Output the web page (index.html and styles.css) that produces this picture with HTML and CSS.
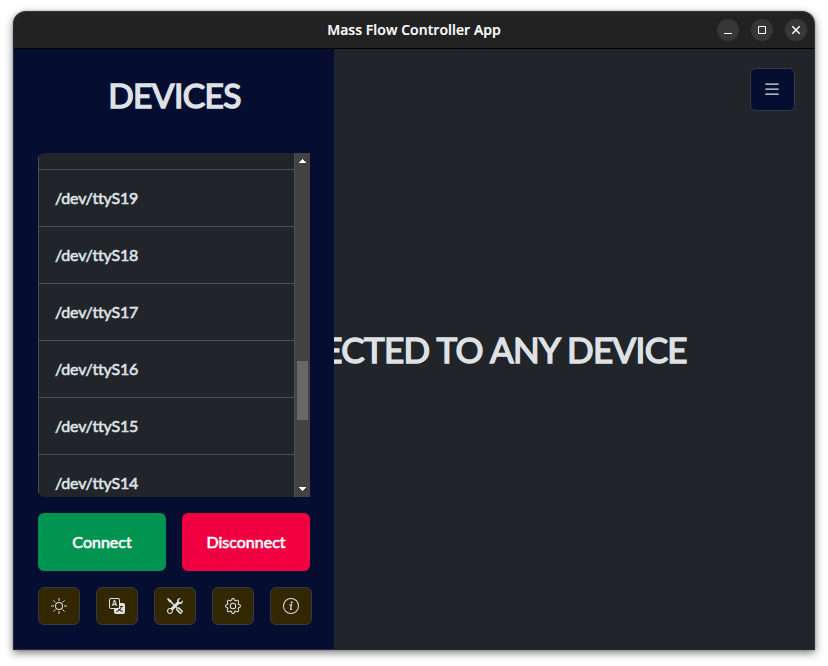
FILE: index.html
```html
<!DOCTYPE html>
<html lang="en">
<head>
<meta charset="utf-8">
<title>Mass Flow Controller App</title>
<link rel="stylesheet" href="styles.css">
</head>
<body>
<div class="window">
  <header class="titlebar">
    <span class="title">Mass Flow Controller App</span>
    <div class="controls">
      <span class="control"><svg viewBox="0 0 22 22"><path d="M7 14.5h8"/></svg></span>
      <span class="control"><svg viewBox="0 0 22 22"><path d="M7.500 7.500h7v7h-7z"/></svg></span>
      <span class="control"><svg viewBox="0 0 22 22"><path stroke-width="1.500" d="M7.300 7.300l7.400 7.400M14.700 7.300l-7.400 7.400"/></svg></span>
    </div>
  </header>
  <div class="app">
    <main class="main">
      <button class="menu-button"><svg class="icon icon-menu" viewBox="0 0 16 16"><path fill-rule="evenodd" d="M2.500 12a.5.5 0 0 1 .5-.5h10a.5.5 0 0 1 0 1H3a.5.5 0 0 1-.5-.5zm0-4a.5.5 0 0 1 .5-.5h10a.5.5 0 0 1 0 1H3a.5.5 0 0 1-.5-.5zm0-4a.5.5 0 0 1 .5-.5h10a.5.5 0 0 1 0 1H3a.5.5 0 0 1-.5-.5z"/></svg></button>
      <h1 class="status">NOT CONNECTED TO ANY DEVICE</h1>
    </main>
    <aside class="sidebar">
      <h2 class="heading">DEVICES</h2>
      <div class="device-box">
        <ul class="devices">
          <li></li>
          <li>/dev/ttyS19</li>
          <li>/dev/ttyS18</li>
          <li>/dev/ttyS17</li>
          <li>/dev/ttyS16</li>
          <li>/dev/ttyS15</li>
          <li>/dev/ttyS14</li>
        </ul>
        <div class="scrollbar">
          <svg viewBox="0 0 15 15"><path shape-rendering="crispEdges" d="M4 10V9h1V8h1V7h1V6h1v1h1v1h1v1h1v1z"/></svg>
          <div class="thumb"></div>
          <svg viewBox="0 0 15 15"><path shape-rendering="crispEdges" d="M4 5h7v1h-1v1H9v1H8v1H7V8H6V7H5V6H4z"/></svg>
        </div>
      </div>
      <div class="actions">
        <button class="action connect">Connect</button>
        <button class="action disconnect">Disconnect</button>
      </div>
      <div class="tools">
        <button class="tool"><svg class="icon" viewBox="0 0 16 16"><path d="M8 11a3 3 0 1 1 0-6 3 3 0 0 1 0 6zm0 1a4 4 0 1 0 0-8 4 4 0 0 0 0 8z"/><path class="line" d="M8 .5v2M8 13.500v2M.5 8h2M13.500 8h2M2.700 2.700l1.410 1.410M11.890 11.890l1.410 1.410M2.700 13.300l1.410-1.410M11.890 4.110l1.410-1.410"/></svg></button>
        <button class="tool"><svg class="icon" viewBox="0 0 16 16"><text class="icon-letter" x="5.500" y="8" text-anchor="middle">A</text><path d="M0 2a2 2 0 0 1 2-2h7a2 2 0 0 1 2 2v3h3a2 2 0 0 1 2 2v7a2 2 0 0 1-2 2H7a2 2 0 0 1-2-2v-3H2a2 2 0 0 1-2-2V2zm2-1a1 1 0 0 0-1 1v7a1 1 0 0 0 1 1h7a1 1 0 0 0 1-1V2a1 1 0 0 0-1-1H2zm7.138 9.995c.193.301.402.583.63.846-.748.575-1.673 1.001-2.768 1.292.178.217.451.635.555.867 1.125-.359 2.080-.844 2.886-1.494.777.665 1.739 1.165 2.930 1.472.133-.254.414-.673.629-.89-1.125-.253-2.057-.694-2.820-1.284.681-.747 1.222-1.651 1.621-2.757H14V8h-3v1.047h.765c-.318.844-.74 1.546-1.272 2.130a6.066 6.066 0 0 1-.415-.492 1.988 1.988 0 0 1-.94.310z"/></svg></button>
        <button class="tool"><svg class="icon" viewBox="0 0 16 16"><path d="M1 0 0 1l2.200 3.081a1 1 0 0 0 .815.419h.07a1 1 0 0 1 .708.293l2.675 2.675-2.617 2.654A3.003 3.003 0 0 0 0 13a3 3 0 1 0 5.878-.851l2.654-2.617.968.968-.305.914a1 1 0 0 0 .242 1.023l3.270 3.270a.997.997 0 0 0 1.414 0l1.586-1.586a.997.997 0 0 0 0-1.414l-3.270-3.270a1 1 0 0 0-1.023-.242L10.500 9.500l-.96-.96 2.680-2.643A3.005 3.005 0 0 0 16 3c0-.269-.035-.53-.102-.777l-2.140 2.141L12 4l-.364-1.757L13.777.102a3 3 0 0 0-3.675 3.680L7.462 6.460 4.793 3.793a1 1 0 0 1-.293-.707v-.071a1 1 0 0 0-.419-.814L1 0zm9.646 10.646a.5.5 0 0 1 .708 0l2.914 2.915a.5.5 0 0 1-.707.707l-2.915-2.914a.5.5 0 0 1 0-.708zM3 11l.471.242.529.026.287.445.445.287.026.529L5 13l-.242.471-.026.529-.445.287-.287.445-.529.026L3 15l-.471-.242L2 14.732l-.287-.445L1.268 14l-.026-.529L1 13l.242-.471.026-.529.445-.287.287-.445.529-.026L3 11z"/></svg></button>
        <button class="tool"><svg class="icon" viewBox="0 0 16 16"><path d="M8 4.754a3.246 3.246 0 1 0 0 6.492 3.246 3.246 0 0 0 0-6.492zM5.754 8a2.246 2.246 0 1 1 4.492 0 2.246 2.246 0 0 1-4.492 0z"/><path d="M9.796 1.343c-.527-1.790-3.065-1.790-3.592 0l-.094.319a.873.873 0 0 1-1.255.52l-.292-.16c-1.640-.892-3.433.902-2.540 2.541l.159.292a.873.873 0 0 1-.52 1.255l-.319.094c-1.790.527-1.790 3.065 0 3.592l.319.094a.873.873 0 0 1 .52 1.255l-.16.292c-.892 1.640.901 3.434 2.541 2.540l.292-.159a.873.873 0 0 1 1.255.52l.094.319c.527 1.790 3.065 1.790 3.592 0l.094-.319a.873.873 0 0 1 1.255-.52l.292.16c1.640.893 3.434-.902 2.540-2.541l-.159-.292a.873.873 0 0 1 .52-1.255l.319-.094c1.790-.527 1.790-3.065 0-3.592l-.319-.094a.873.873 0 0 1-.52-1.255l.16-.292c.893-1.640-.902-3.433-2.541-2.540l-.292.159a.873.873 0 0 1-1.255-.52l-.094-.319zm-2.633.283c.246-.835 1.428-.835 1.674 0l.094.319a1.873 1.873 0 0 0 2.693 1.115l.291-.16c.764-.415 1.600.42 1.184 1.185l-.159.292a1.873 1.873 0 0 0 1.116 2.692l.318.094c.835.246.835 1.428 0 1.674l-.319.094a1.873 1.873 0 0 0-1.115 2.693l.16.291c.415.764-.42 1.600-1.185 1.184l-.291-.159a1.873 1.873 0 0 0-2.693 1.116l-.094.318c-.246.835-1.428.835-1.674 0l-.094-.319a1.873 1.873 0 0 0-2.692-1.115l-.292.16c-.764.415-1.600-.42-1.184-1.185l.159-.291A1.873 1.873 0 0 0 1.945 8.930l-.319-.094c-.835-.246-.835-1.428 0-1.674l.319-.094A1.873 1.873 0 0 0 3.060 4.377l-.16-.292c-.415-.764.42-1.600 1.185-1.184l.292.159a1.873 1.873 0 0 0 2.692-1.115l.094-.319z"/></svg></button>
        <button class="tool"><svg class="icon" viewBox="0 0 16 16"><path d="M8 15A7 7 0 1 1 8 1a7 7 0 0 1 0 14zm0 1A8 8 0 1 0 8 0a8 8 0 0 0 0 16z"/><circle cx="8.700" cy="4.500" r="1"/><path class="line" stroke-width="1.200" d="M6.700 7l1.800-.3-.95 4.100q-.1.900 1.200.5"/></svg></button>
      </div>
    </aside>
  </div>
</div>
</body>
</html>
```
FILE: styles.css
```css
* { box-sizing: border-box; }
html, body { margin: 0; height: 100%; overflow: hidden; }
body {
  background: #fff;
  padding: 11px 13px 16px;
  font-family: Lato, "Liberation Sans", sans-serif;
  color: #dee2e6;
}
button { font: inherit; color: inherit; padding: 0; }
.window {
  display: flex;
  flex-direction: column;
  width: 802px;
  height: 639px;
  border: 1px solid #363636;
  border-left-color: #232938;
  border-bottom-color: #282b2f;
  border-radius: 13px 13px 0 0;
  background: #222;
  overflow: hidden;
  box-shadow: 0 3px 9px rgba(0, 0, 0, .5), 0 0 2px rgba(0, 0, 0, .3);
}
.titlebar {
  display: grid;
  grid-template-columns: 1fr auto 1fr;
  align-items: center;
  flex: 0 0 37px;
  height: 37px;
  border-bottom: 1px solid #000;
}
.title {
  grid-column: 2;
  color: #fff;
  font: 600 14px/20px "Open Sans", sans-serif;
  letter-spacing: .07px;
  -webkit-text-stroke: .2px #fff;
}
.controls { grid-column: 3; display: flex; justify-content: flex-end; gap: 12px; padding-right: 7px; }
.control { width: 22px; height: 22px; border-radius: 50%; background: #373737; }
.control svg { display: block; width: 22px; height: 22px; fill: none; stroke: #fff; }
.app { display: grid; grid-template-columns: 320px 1fr; flex: 1; min-height: 0; background: #212529; }
.main {
  grid-area: 1 / 1 / 2 / 3;
  display: flex;
  flex-direction: column;
  align-items: flex-end;
  padding: 19px;
}
.menu-button {
  display: flex;
  align-items: center;
  justify-content: center;
  width: 45px;
  height: 43px;
  padding: 0 2px 1px 0;
  border: 1px solid #343a40;
  border-radius: 6px;
  background: #050e31;
}
.icon { display: block; width: 16px; height: 16px; fill: #dee2e6; overflow: visible; }
.icon-menu { width: 20px; height: 20px; }
.line { fill: none; stroke: #dee2e6; stroke-linecap: round; }
.icon-letter { font: 900 7px Lato, sans-serif; }
.status, .heading { margin: 0; font-weight: 400; -webkit-text-stroke: 1.5px #dee2e6; white-space: nowrap; }
.status { align-self: center; margin-top: 217px; font-size: 35px; line-height: 43px; letter-spacing: -.68px; }
.sidebar {
  z-index: 1;
  grid-area: 1 / 1 / 2 / 2;
  padding: 24px 24px 0;
  background: #050e31;
}
.heading { height: 80px; padding-left: 1px; font-size: 33.5px; line-height: 45px; text-align: center; letter-spacing: -.6px; }
.device-box {
  display: flex;
  height: 344px;
  border-radius: 6px 0 0 6px;
  background: #212529;
  overflow: hidden;
}
.devices {
  width: 257px;
  height: 400px;
  margin: -40px 0 0;
  padding: 0;
  list-style: none;
  border: solid #495057;
  border-width: 0 1px;
}
.devices li {
  height: 57px;
  padding: 0 16px;
  border-bottom: 1px solid #495057;
  font-size: 16px;
  line-height: 55px;
  letter-spacing: -.2px;
  -webkit-text-stroke: .6px #dee2e6;
}
.scrollbar { display: flex; flex-direction: column; width: 15px; background: #424242; }
.scrollbar svg { width: 15px; height: 15px; fill: #fff; }
.thumb { width: 11px; height: 59px; margin: 193px 2px auto; background: #686868; }
.actions { display: flex; gap: 16px; margin-top: 16px; }
.action {
  width: 128px;
  height: 58px;
  padding-bottom: 2px;
  border: 0;
  border-radius: 6px;
  color: #fff;
  font-size: 16px;
  -webkit-text-stroke: .6px #fff;
}
.connect { background: #009450; }
.disconnect { background: #f00041; }
.tools { display: flex; gap: 16px; margin-top: 16px; }
.tool {
  display: flex;
  align-items: center;
  justify-content: center;
  flex: 0 0 42px;
  height: 38px;
  border: 1px solid #343a40;
  border-radius: 6px;
  background: #332701;
}
```
